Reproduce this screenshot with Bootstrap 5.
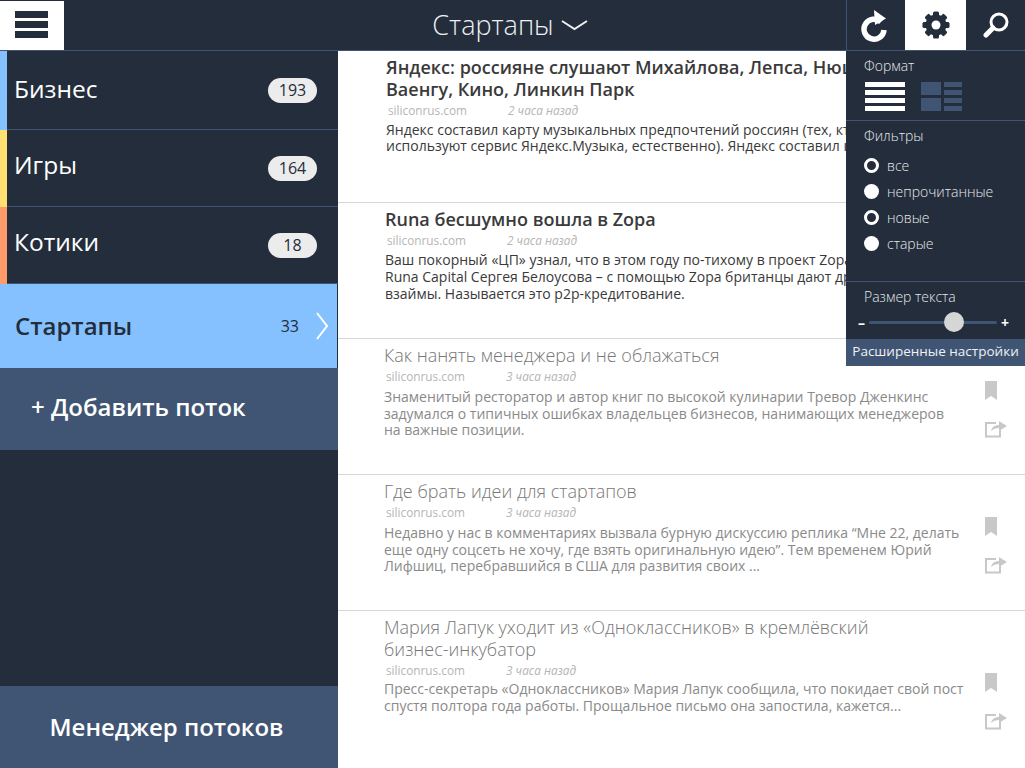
<!DOCTYPE html>
<html lang="ru">
<head>
    <meta charset="UTF-8">
    <meta name="viewport" content="width=device-width, initial-scale=1.0">
    <title>Стартапы</title>
    <link href="https://cdn.jsdelivr.net/npm/bootstrap@5.3.0/dist/css/bootstrap.min.css" rel="stylesheet">
    <style>
        html, body { height: 100%; overflow: hidden; }
        body { font-family: "Open Sans", "Noto Sans", sans-serif; background: #fff; color: #3a3a3a; }
        .app-wrap { height: 768px; position: relative; overflow: hidden; }
        .top-bar { height: 51px; background: #232d3b; border-bottom: 1px solid #3f5573; }
        .menu-btn { width: 64px; height: 50px; background: #fff; border-top: 1px solid #232d3b; flex-direction: column; gap: 3px; padding: 0 2px 2px 0; }
        .menu-btn span { width: 33px; height: 7px; background: #232d3b; display: block; }
        .top-title { width: 782px; padding-left: 110px; color: #eef0f2; font-size: 27px; font-weight: 300; gap: 7px; }
        .tool-btn { width: 59px; height: 50px; }
        .tool-first { border-left: 1px solid #3f5573; padding: 2px 4px 0 0; }
        .tool-on { background: #fff; width: 61px; }
        .side-col { width: 338px; background: #232d3b; height: 717px; }
        .stream-row { height: 77px; color: #fff; font-size: 24.5px; }
        .row-one { height: 79px; }
        .row-inner { flex: 1; padding: 0 21px 0 7px; border-bottom: 1px solid #3f5573; }
        .row-a { border-left: 7px solid #85c1ff; }
        .row-b { border-left: 7px solid #ffe070; }
        .row-c { border-left: 7px solid #ff9a6b; }
        .stream-label { margin-bottom: 6px; }
        .row-one .stream-label { margin-bottom: 2px; }
        .stream-count { width: 49px; height: 25px; border-radius: 13px; background: #ececec; color: #232d3b; font-size: 16px; line-height: 25px; text-align: center; }
        .stream-on { height: 84px; background: #85c1ff; color: #232d3b; font-size: 24px; font-weight: 600; padding: 0 8px 1px 15px; border-right: 1px solid #232d3b; }
        .stream-on-count { font-size: 16px; font-weight: 400; margin-right: 16px; }
        .stream-add { height: 82px; background: #3f5573; color: #fff; font-size: 24px; font-weight: 600; padding: 0 0 4px 31px; }
        .stream-mgr { height: 82px; background: #3f5573; color: #fff; font-size: 24px; font-weight: 600; margin-top: auto; padding-right: 5px; }
        .feed-col { flex: 1; min-width: 0; }
        .feed-item { height: 136px; border-bottom: 1px solid #d6d6d6; padding: 5px 40px 0 46px; position: relative; }
        .feed-first { height: 152px; padding-left: 48px; }
        .feed-second { padding-left: 47px; }
        .feed-last { height: 158px; border-bottom: 0; }
        .feed-title { font-size: 18px; line-height: 22px; margin: 0; font-weight: 600; color: #3a3a3a; }
        .feed-meta { font-size: 11.8px; line-height: 15px; margin: 3px 0 3px 2px; color: #b5b5b5; display: flex; }
        .feed-first .feed-meta { margin-bottom: 4px; }
        .feed-read .feed-meta { margin-bottom: 5px; }
        .feed-read.feed-last .feed-meta { margin-bottom: 3px; }
        .feed-site { width: 120px; }
        .feed-time { font-style: italic; }
        .feed-text { font-size: 14px; line-height: 17px; margin: 0; color: #3a3a3a; white-space: nowrap; }
        .feed-first .feed-text { line-height: 16px; }
        .feed-read .feed-title { font-weight: 300; color: #777; }
        .feed-read .feed-text { color: #8a8a8a; line-height: 16.5px; }
        .feed-actions { position: absolute; left: 646px; top: 42px; gap: 20px; width: 24px; }
        .feed-last .feed-actions { top: 62px; }
        .feed-actions svg:first-child { margin-left: 1px; }
        .opt-panel { position: absolute; left: 846px; top: 51px; width: 179px; height: 315px; background: #232d3b; color: #e6e8eb; font-size: 14px; font-weight: 300; }
        .opt-format { height: 70px; padding: 6px 0 0 18px; border-bottom: 1px solid #3f5573; }
        .opt-format-icons { gap: 16px; margin: 7px 0 0 1px; }
        .opt-filter { height: 161px; padding: 6px 0 0 18px; border-bottom: 1px solid #3f5573; }
        .opt-heading { line-height: 18px; }
        .opt-heading-gap { margin-bottom: 7px; }
        .opt-radio { height: 26px; gap: 8px; }
        .radio-dot { width: 15px; height: 15px; border-radius: 50%; background: #fff; flex: none; }
        .radio-open { background: transparent; border: 3px solid #fff; }
        .opt-size { height: 57px; padding: 6px 0 0 18px; }
        .size-track { margin: 6px 0 0 -6px; width: 151px; gap: 4px; color: #fff; font-size: 14px; font-weight: 700; }
        .size-line { flex: 1; height: 3px; background: #3f5573; border-radius: 2px; position: relative; }
        .size-knob { position: absolute; left: 75px; top: -9px; width: 20px; height: 20px; border-radius: 50%; background: #d6d6d6; }
        .opt-more { height: 27px; padding-bottom: 2px; background: #3f5573; color: #f0f2f4; font-size: 13.5px; font-weight: 400; }
    </style>
</head>
<body>
<div class="app-wrap">
    <!-- Верхняя панель -->
    <header class="top-bar d-flex">
        <div class="menu-btn d-flex align-items-center justify-content-center"><span></span><span></span><span></span></div>
        <div class="top-title d-flex align-items-center justify-content-center">Стартапы
            <svg width="27" height="12" viewBox="0 0 27 12"><path d="M1 2 L13.5 10 L26 2" fill="none" stroke="#eef0f2" stroke-width="2"/></svg>
        </div>
        <div class="tool-btn tool-first d-flex align-items-center justify-content-center">
            <svg width="28" height="32" viewBox="0 0 28 32"><path d="M21 12 A10 10 0 1 0 24 20" fill="none" stroke="#fff" stroke-width="5.5"/><path d="M14 0 L26 8.500 L15 15 Z" fill="#fff"/></svg>
        </div>
        <div class="tool-btn tool-on d-flex align-items-center justify-content-center">
            <svg width="28" height="28" viewBox="0 0 28 28"><g fill="#232d3b"><rect x="11" y="0.500" width="6" height="27" rx="1.500"/><rect x="11" y="0.500" width="6" height="27" rx="1.500" transform="rotate(45 14 14)"/><rect x="11" y="0.500" width="6" height="27" rx="1.500" transform="rotate(90 14 14)"/><rect x="11" y="0.500" width="6" height="27" rx="1.500" transform="rotate(135 14 14)"/></g><circle cx="14" cy="14" r="8" fill="none" stroke="#232d3b" stroke-width="5"/><circle cx="14" cy="14" r="4.500" fill="#fff"/></svg>
        </div>
        <div class="tool-btn d-flex align-items-center justify-content-center">
            <svg width="26" height="26" viewBox="0 0 26 26"><circle cx="16" cy="10" r="8" fill="none" stroke="#fff" stroke-width="3"/><path d="M10 16 L3 23" stroke="#fff" stroke-width="5" stroke-linecap="round"/></svg>
        </div>
    </header>

    <div class="d-flex">
        <!-- Потоки -->
        <aside class="side-col d-flex flex-column">
            <div class="stream-row row-one row-a d-flex"><div class="row-inner d-flex align-items-center justify-content-between"><span class="stream-label">Бизнес</span><div class="stream-count">193</div></div></div>
            <div class="stream-row row-b d-flex"><div class="row-inner d-flex align-items-center justify-content-between"><span class="stream-label">Игры</span><div class="stream-count">164</div></div></div>
            <div class="stream-row row-c d-flex"><div class="row-inner d-flex align-items-center justify-content-between"><span class="stream-label">Котики</span><div class="stream-count">18</div></div></div>
            <div class="stream-on d-flex align-items-center"><div class="flex-grow-1">Стартапы</div><div class="stream-on-count">33</div>
                <svg width="14" height="28" viewBox="0 0 14 28"><path d="M2 1 L12 14 L2 27" fill="none" stroke="#fff" stroke-width="2"/></svg>
            </div>
            <div class="stream-add d-flex align-items-center">+ Добавить поток</div>
            <div class="stream-mgr d-flex align-items-center justify-content-center">Менеджер потоков</div>
        </aside>

        <!-- Лента -->
        <main class="feed-col">
            <article class="feed-item feed-first">
                <h2 class="feed-title text-nowrap">Яндекс: россияне слушают Михайлова, Лепса, Нюшу,<br>Ваенгу, Кино, Линкин Парк</h2>
                <div class="feed-meta"><span class="feed-site">siliconrus.com</span><span class="feed-time">2 часа назад</span></div>
                <p class="feed-text">Яндекс составил карту музыкальных предпочтений россиян (тех, кто<br>используют сервис Яндекс.Музыка, естественно). Яндекс составил карту</p>
            </article>
            <article class="feed-item feed-second">
                <h2 class="feed-title">Runa бесшумно вошла в Zopa</h2>
                <div class="feed-meta"><span class="feed-site">siliconrus.com</span><span class="feed-time">2 часа назад</span></div>
                <p class="feed-text">Ваш покорный «ЦП» узнал, что в этом году по-тихому в проект Zopa<br>Runa Capital Сергея Белоусова – с помощью Zopa британцы дают друг<br>взаймы. Называется это p2p-кредитование.</p>
            </article>
            <article class="feed-item feed-read">
                <h2 class="feed-title">Как нанять менеджера и не облажаться</h2>
                <div class="feed-meta"><span class="feed-site">siliconrus.com</span><span class="feed-time">3 часа назад</span></div>
                <p class="feed-text">Знаменитый ресторатор и автор книг по высокой кулинарии Тревор Дженкинс<br>задумался о типичных ошибках владельцев бизнесов, нанимающих менеджеров<br>на важные позиции.</p>
                <div class="feed-actions d-flex flex-column align-items-start">
                    <svg width="12" height="19" viewBox="0 0 12 19"><path d="M0 0 H12 V19 L6 15 L0 19 Z" fill="#c8c8c8"/></svg>
                    <svg width="23" height="18" viewBox="0 0 23 18"><path d="M12 3 H2 V16.500 H16 V10" fill="none" stroke="#c8c8c8" stroke-width="2"/><path d="M7 11 C8 7 11 5 15 5 V1 L23 6 L15 11 V8 C12 8 9 9 7 11 Z" fill="#c8c8c8"/></svg>
                </div>
            </article>
            <article class="feed-item feed-read">
                <h2 class="feed-title">Где брать идеи для стартапов</h2>
                <div class="feed-meta"><span class="feed-site">siliconrus.com</span><span class="feed-time">3 часа назад</span></div>
                <p class="feed-text">Недавно у нас в комментариях вызвала бурную дискуссию реплика “Мне 22, делать<br>еще одну соцсеть не хочу, где взять оригинальную идею”. Тем временем Юрий<br>Лифшиц, перебравшийся в США для развития своих ...</p>
                <div class="feed-actions d-flex flex-column align-items-start">
                    <svg width="12" height="19" viewBox="0 0 12 19"><path d="M0 0 H12 V19 L6 15 L0 19 Z" fill="#c8c8c8"/></svg>
                    <svg width="23" height="18" viewBox="0 0 23 18"><path d="M12 3 H2 V16.500 H16 V10" fill="none" stroke="#c8c8c8" stroke-width="2"/><path d="M7 11 C8 7 11 5 15 5 V1 L23 6 L15 11 V8 C12 8 9 9 7 11 Z" fill="#c8c8c8"/></svg>
                </div>
            </article>
            <article class="feed-item feed-read feed-last">
                <h2 class="feed-title">Мария Лапук уходит из «Одноклассников» в кремлёвский<br>бизнес-инкубатор</h2>
                <div class="feed-meta"><span class="feed-site">siliconrus.com</span><span class="feed-time">3 часа назад</span></div>
                <p class="feed-text">Пресс-секретарь «Одноклассников» Мария Лапук сообщила, что покидает свой пост<br>спустя полтора года работы. Прощальное письмо она запостила, кажется...</p>
                <div class="feed-actions d-flex flex-column align-items-start">
                    <svg width="12" height="19" viewBox="0 0 12 19"><path d="M0 0 H12 V19 L6 15 L0 19 Z" fill="#c8c8c8"/></svg>
                    <svg width="23" height="18" viewBox="0 0 23 18"><path d="M12 3 H2 V16.500 H16 V10" fill="none" stroke="#c8c8c8" stroke-width="2"/><path d="M7 11 C8 7 11 5 15 5 V1 L23 6 L15 11 V8 C12 8 9 9 7 11 Z" fill="#c8c8c8"/></svg>
                </div>
            </article>
        </main>
    </div>

    <!-- Меню настроек -->
    <section class="opt-panel">
        <div class="opt-format">
            <div class="opt-heading">Формат</div>
            <div class="opt-format-icons d-flex">
                <svg width="40" height="29" viewBox="0 0 40 29"><path d="M0 0 H40 V5 H0 Z M0 8 H40 V13 H0 Z M0 16 H40 V21 H0 Z M0 24 H40 V29 H0 Z" fill="#fff"/></svg>
                <svg width="41" height="29" viewBox="0 0 41 29"><path d="M0 0 H20 V13 H0 Z M0 16 H20 V29 H0 Z M23 0 H41 V5 H23 Z M23 8 H41 V13 H23 Z M23 16 H41 V21 H23 Z M23 24 H41 V29 H23 Z" fill="#3f5573"/></svg>
            </div>
        </div>
        <div class="opt-filter">
            <div class="opt-heading opt-heading-gap">Фильтры</div>
            <div class="opt-radio d-flex align-items-center"><span class="radio-dot radio-open"></span>все</div>
            <div class="opt-radio d-flex align-items-center"><span class="radio-dot"></span>непрочитанные</div>
            <div class="opt-radio d-flex align-items-center"><span class="radio-dot radio-open"></span>новые</div>
            <div class="opt-radio d-flex align-items-center"><span class="radio-dot"></span>старые</div>
        </div>
        <div class="opt-size">
            <div class="opt-heading">Размер текста</div>
            <div class="size-track d-flex align-items-center"><span>–</span><div class="size-line"><span class="size-knob"></span></div><span>+</span></div>
        </div>
        <div class="opt-more d-flex align-items-center justify-content-center">Расширенные настройки</div>
    </section>
</div>
<script src="https://cdn.jsdelivr.net/npm/bootstrap@5.3.0/dist/js/bootstrap.bundle.min.js"></script>
</body>
</html>
